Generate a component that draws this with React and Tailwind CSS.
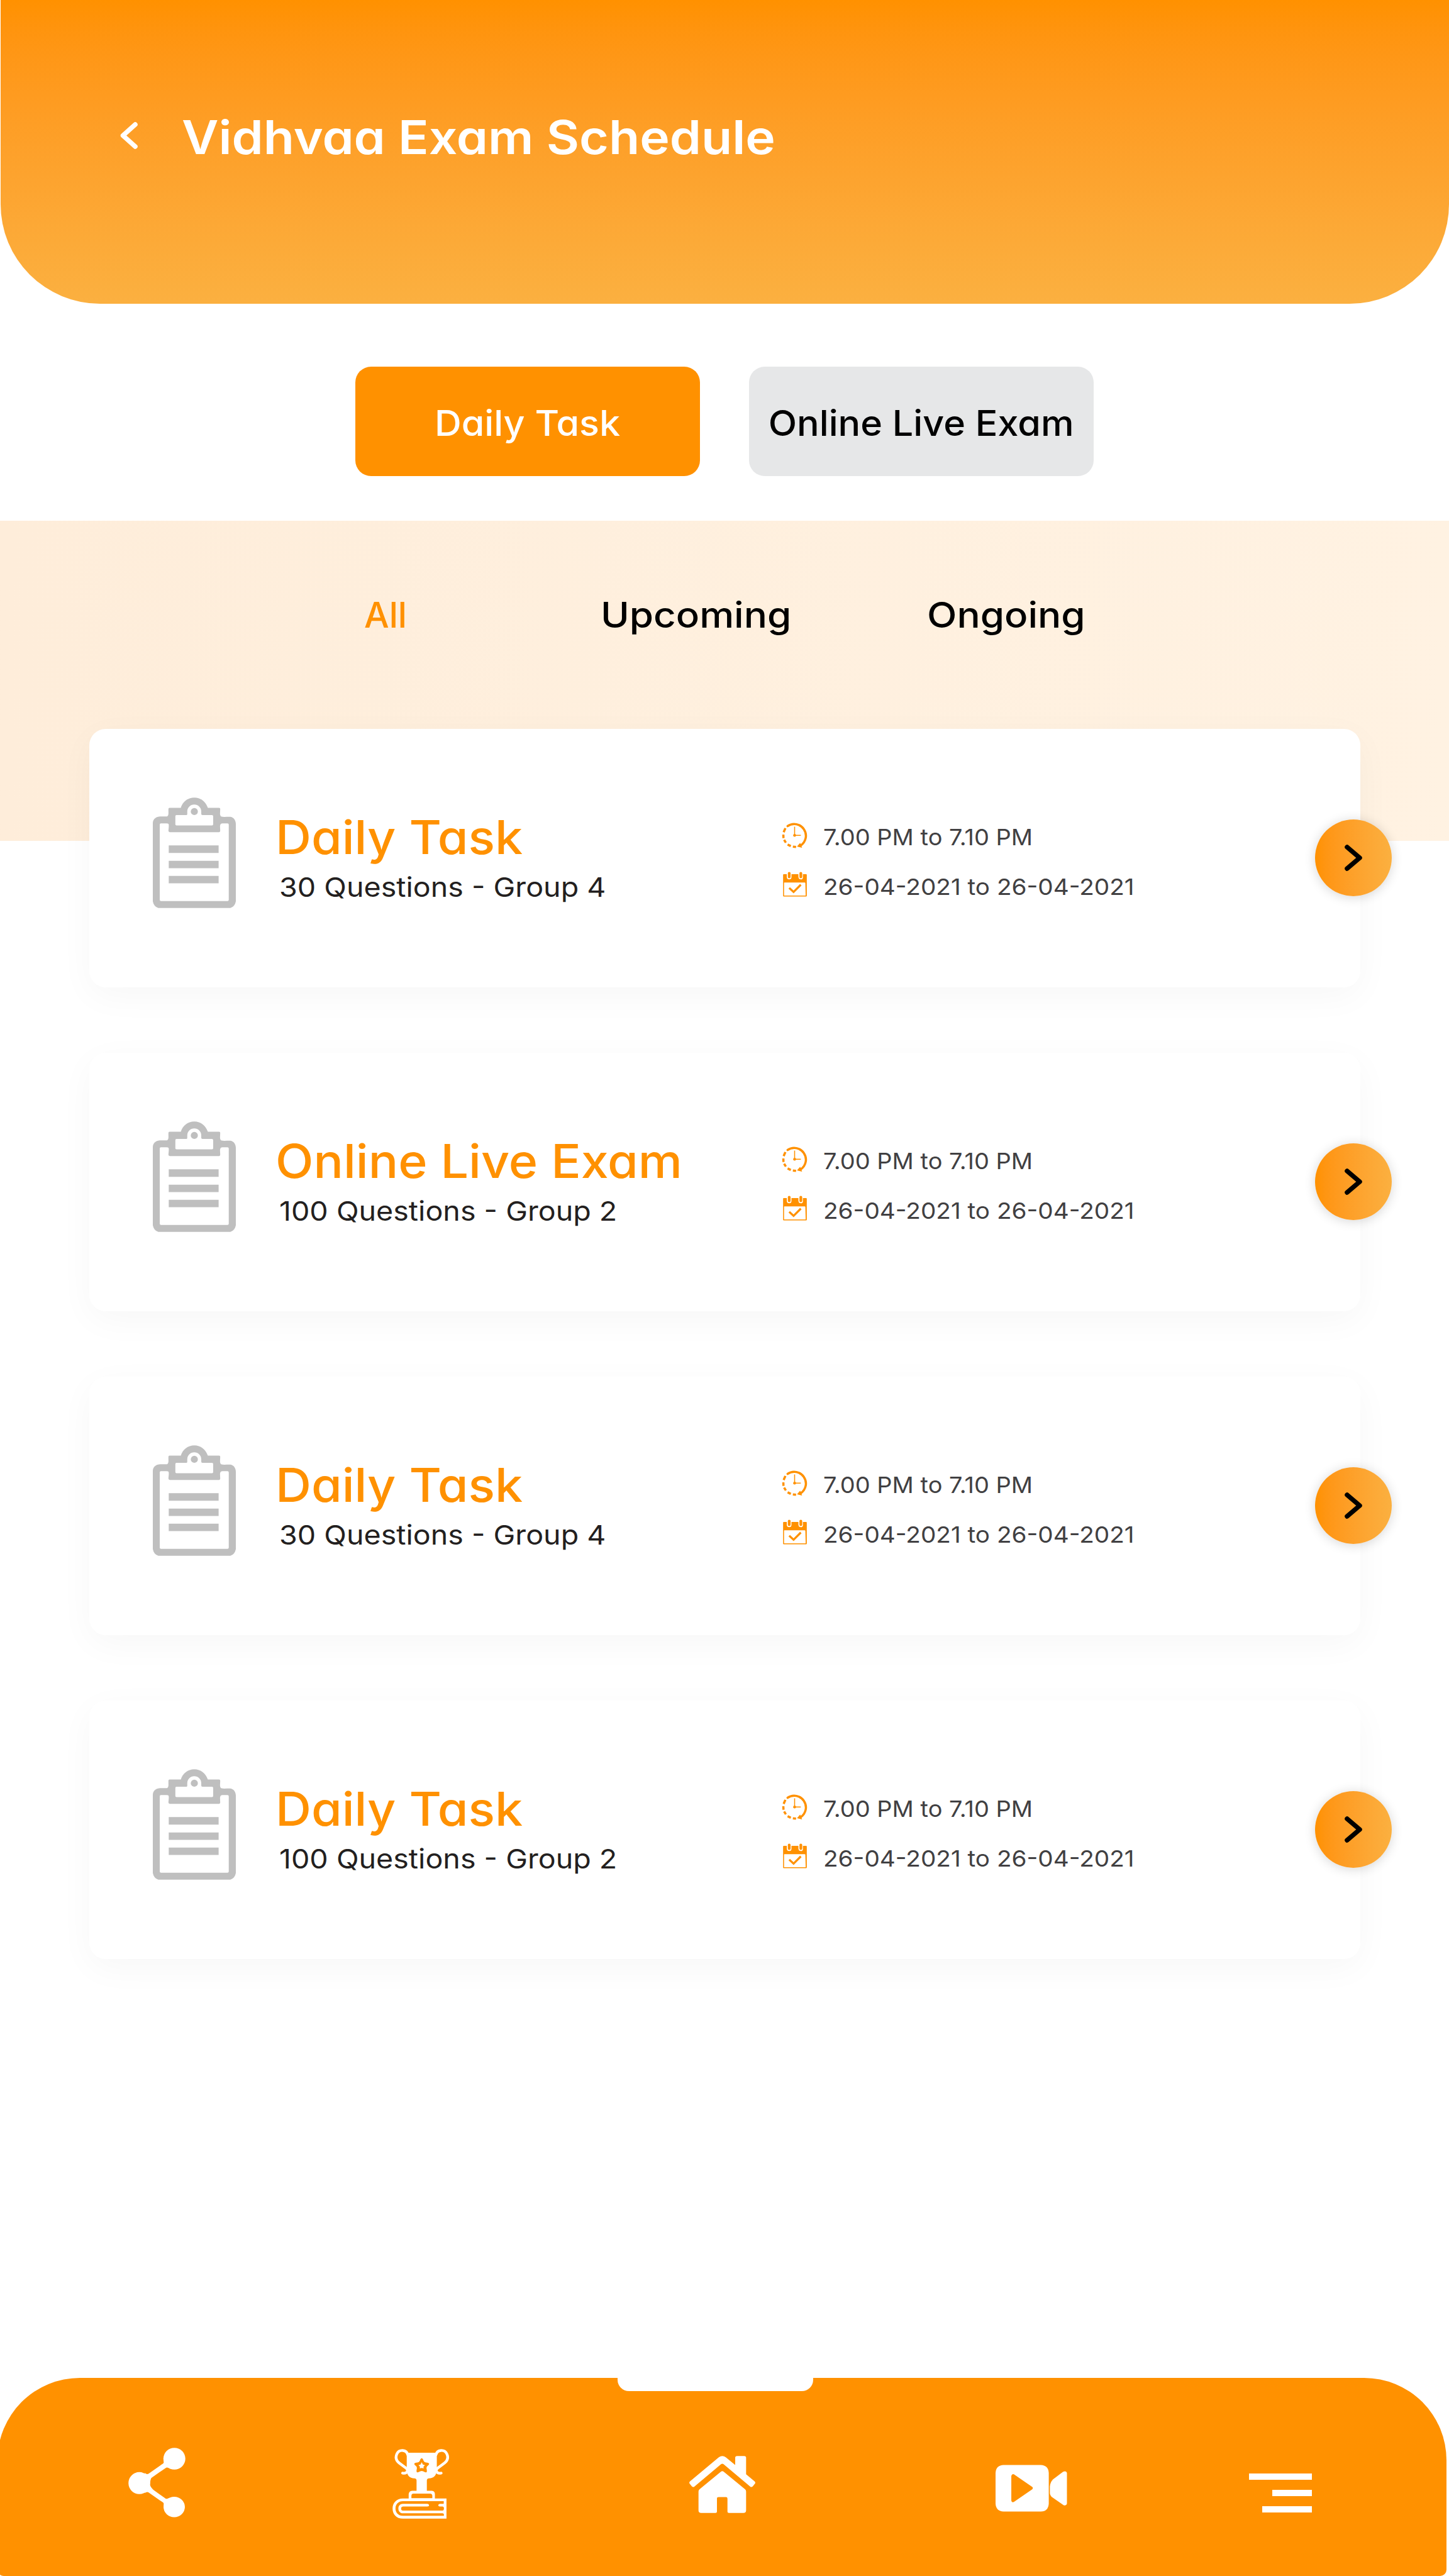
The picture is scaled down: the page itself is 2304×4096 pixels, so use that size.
import React from "react";

const FONT = "font-['Inter','Noto_Sans',sans-serif] [font-feature-settings:'cv11']";

const exams = [
  { title: "Daily Task", meta: "30 Questions - Group 4" },
  { title: "Online Live Exam", meta: "100 Questions - Group 2" },
  { title: "Daily Task", meta: "30 Questions - Group 4" },
  { title: "Daily Task", meta: "100 Questions - Group 2" },
];

function ClipboardIcon() {
  return (
    <svg viewBox="78 93 516 687" className="mt-[109px] ml-[101px] h-[176px] w-[132px] shrink-0 fill-[#bfbfbf]">
      <path
        fillRule="evenodd"
        d="M252 157C264 118 296 93 336 93S406 118 420 157H490Q497 157 497 165C497 185 492 200 502 211C520 216 545 211 560 213C582 217 594 236 594 258V738Q588 770 560 780H112Q84 770 78 738V250C80 226 100 211 124 211H162C180 210 174 185 175 165Q175 157 182 157ZM176 258Q172 253 160 254H128Q121 254 121 262V729Q121 737 129 737H542Q550 737 550 729V262Q550 254 542 254H510C490 256 497 280 497 300Q497 308 490 308H184Q175 308 175 300C176 285 179 268 176 258ZM292 196Q292 202 286 202H225Q218 202 218 209V260Q218 266 225 266H446Q453 266 453 260V209Q453 202 446 202H386Q379 202 379 194V180A43.500 43.500 0 0 0 292 180Z"
      />
      <circle cx="336" cy="180" r="22" />
      <path d="M177 391H487V437H177ZM177 486H487V532H177ZM177 580H487V626H177Z" />
    </svg>
  );
}

function ClockIcon() {
  return (
    <svg viewBox="88 96 164 166" className="-mt-1.5 h-[42px] w-[42px] shrink-0" fill="none" stroke="#ff9100">
      <path d="M124 122A73 73 0 1 1 207 243" strokeWidth="14" strokeLinecap="round" />
      <path d="M110 135L99 160M97 175L98 197M102 208L113 226M124 238L144 248M157 251L177 253" strokeWidth="14" />
      <path d="M183 250L203 227L215 258Z" fill="#ff9100" stroke="none" />
      <path d="M168 126V180H207" strokeWidth="6" />
      <circle cx="168" cy="180" r="9" fill="#ff9100" stroke="none" />
    </svg>
  );
}

function CalendarIcon() {
  return (
    <svg viewBox="93 407 153 156" className="mx-px -mt-1.5 h-[40px] w-[40px] shrink-0">
      <path
        fill="#ff9100"
        fillRule="evenodd"
        d="M100 423H119V440Q120 455 134 455T148 440V423H191V440Q192 455 206 455T219 440V423H239Q243 423 243 427V557Q243 561 239 561H100Q96 561 96 557V427Q96 423 100 423ZM104 474Q102 474 102 478V553Q102 555 104 555H234Q236 555 236 553L234 478Q234 474 230 474Z"
      />
      <path d="M134 417V439M206 417V439" stroke="#ff9100" strokeWidth="17" strokeLinecap="round" />
      <path d="M134 508L161 533L206 488" fill="none" stroke="#ff9100" strokeWidth="13" />
    </svg>
  );
}

function ExamCard({ title, meta }) {
  return (
    <article className="relative flex h-[411px] w-[2021px] items-start rounded-[26px] bg-white shadow-[0_14px_56px_rgba(0,0,0,0.035)]">
      <ClipboardIcon />
      <div className="mt-[135px] ml-[63px] w-[805px] whitespace-nowrap">
        <h2 className="w-max origin-left scale-x-[1.066] text-[74px] leading-none font-medium text-[#ff9100]">{title}</h2>
        <p className="mt-[21px] ml-1.5 w-max origin-left scale-x-[1.084] text-[43px] leading-none text-[#231f20]">{meta}</p>
      </div>
      <div className="mt-[154px] whitespace-nowrap text-[#414042]">
        <div className="flex h-9 items-start">
          <ClockIcon />
          <span className="ml-[24px] origin-left scale-x-[1.055] text-[36px] leading-none">7.00 PM to 7.10 PM</span>
        </div>
        <div className="mt-[43px] flex h-9 items-start">
          <CalendarIcon />
          <span className="ml-[24px] origin-left scale-x-[1.075] text-[36px] leading-none">26-04-2021 to 26-04-2021</span>
        </div>
      </div>
      <button className="absolute top-[144px] -right-[50px] flex h-[122px] w-[122px] items-center justify-center rounded-full bg-linear-to-r from-[#ff9100] to-[#fbb040] shadow-[0_2px_18px_rgba(0,0,0,0.16)]">
        <svg viewBox="0 0 28 42" className="h-[42px] w-[28px]" fill="none" stroke="#000" strokeWidth="7.500" strokeLinecap="round" strokeLinejoin="round">
          <path d="M4 4L24 21L4 38" />
        </svg>
      </button>
    </article>
  );
}

function ShareIcon() {
  return (
    <svg viewBox="798 506 354 432" className="mt-[111px] ml-[208px] h-[111px] w-[91px] shrink-0 fill-white">
      <ellipse cx="1083" cy="574" rx="68" ry="67" />
      <ellipse cx="866" cy="725" rx="67" ry="68" />
      <ellipse cx="1082" cy="873" rx="66" ry="63" />
      <path d="M900 662Q912 674 924 667L1014 603Q1020 598 1016 585L1062 638Q1040 622 1028 632L941 693Q934 702 932 735Q936 753 957 770L1028 820Q1036 826 1055 815L1016 868Q1020 852 1014 846L924 783Q914 776 900 786Z" />
    </svg>
  );
}

function TrophyIcon() {
  return (
    <svg viewBox="24 34 350 434" className="mt-[113px] ml-[329px] h-[111px] w-[90px] shrink-0">
      <g fill="none" stroke="#fff" strokeLinecap="round" strokeLinejoin="round">
        <path d="M118 70C112 38 66 34 51 64C38 92 50 110 66 122L108 153Q118 162 116 172Q110 188 86 184" strokeWidth="17" />
        <path d="M294 70C300 38 346 34 361 64C374 92 362 110 346 122L304 153Q294 162 296 172Q302 188 326 184" strokeWidth="17" />
      </g>
      <path
        fill="#fff"
        d="M112 57H299V165C298 198 280 216 250 217Q237 218 237 230V294H268Q287 296 287 315V342H359V467H88C48 467 24 440 24 405S48 342 88 342H124V315Q126 296 145 294H173V230Q173 218 160 217C130 216 112 198 112 165Z"
      />
      <g fill="#ff9100">
        <path d="M141 340V325Q142 312 154 312H258Q270 313 271 325V340Z" />
        <path d="M342 359V373Q340 376 334 375H318Q308 376 308 384T318 392H334Q342 392 343 400V408Q342 417 334 417H88Q77 416 77 405T88 392H240Q251 391 251 384T240 375H88C70 375 60 388 60 404S70 434 88 434H334Q342 434 343 441V449H88C60 449 42 430 42 404S60 359 88 359Z" />
        <circle cx="281" cy="384" r="9" />
        <path d="M205 92Q211 92 217 108Q221 117 231 118Q250 120 251 126Q252 131 239 142Q234 147 235 155Q240 176 234 179Q229 182 214 173Q205 168 196 173Q181 182 176 179Q170 176 175 155Q176 147 171 142Q158 131 159 126Q160 120 179 118Q189 117 193 108Q199 92 205 92Z" />
      </g>
      <path fill="#fff" d="M205 116L212 131L225 135L216 144L217 155Q205 150 193 155L194 144L185 135L198 131Z" />
    </svg>
  );
}

function HomeIcon() {
  return (
    <svg viewBox="596 617 358 355" preserveAspectRatio="none" className="mt-[124px] ml-[382px] h-[91px] w-[105px] shrink-0 fill-white">
      <path d="M756 626Q775 610 794 626L845 674V628Q845 618 855 618H894Q904 618 904 628V731L950 775Q957 783 951 791L940 806Q933 814 926 807L782 669Q775 662 768 669L624 807Q617 814 610 806L599 791Q593 783 600 775Z" />
      <path d="M768 715Q775 708 782 715L898 824Q904 829 904 838V955Q904 971 889 971H811Q803 971 803 963V882Q803 873 795 873H755Q746 873 746 882V963Q746 971 738 971H661Q646 971 646 955V838Q646 829 652 824Z" />
    </svg>
  );
}

function VideoIcon() {
  return (
    <svg viewBox="34 44 446 291" className="mt-[138px] ml-[382px] h-[75px] w-[114px] shrink-0 fill-white">
      <path
        fillRule="evenodd"
        d="M84 45H315Q362 46 365 94V285Q362 333 315 334H84Q37 332 34 285V94Q37 46 84 45ZM132 112V266Q134 281 148 275L263 195Q270 188 263 182L148 102Q136 98 132 112Z"
      />
      <path d="M454 87Q474 78 478 94V285Q474 300 458 295L382 242Q372 234 372 220V178Q374 152 392 134Z" />
    </svg>
  );
}

function MenuIcon() {
  return (
    <div className="mt-[152px] ml-[289px] flex w-[100px] shrink-0 flex-col items-end gap-4">
      <span className="h-[10px] w-[100px] bg-white" />
      <span className="h-[10px] w-[63px] bg-white" />
      <span className="h-[10px] w-[79px] bg-white" />
    </div>
  );
}

export default function App() {
  return (
    <div className={`flex h-[4096px] w-[2304px] flex-col overflow-hidden bg-white ${FONT}`}>
      <header className="ml-px flex h-[483px] shrink-0 items-start rounded-b-[158px] bg-linear-to-b from-[#ff9100] to-[#fbb040] text-white">
        <svg viewBox="0 0 28 43" className="mt-[194px] ml-[190px] h-[43px] w-[28px]" fill="none" stroke="currentColor" strokeWidth="7.500" strokeLinecap="round" strokeLinejoin="round">
          <path d="M24 4L4.500 21.500L24 39" />
        </svg>
        <h1 className="mt-[181px] ml-[70px] origin-left scale-x-[1.087] text-[74px] leading-none font-semibold whitespace-nowrap">Vidhvaa Exam Schedule</h1>
      </header>

      <div className="flex h-[345px] shrink-0 gap-[78px] pt-[100px] pl-[565px] text-[56px] leading-none font-medium whitespace-nowrap">
        <button className="flex h-[174px] w-[548px] justify-center rounded-[25px] bg-[#ff9100] pt-[62px] text-white">
          <span className="scale-x-[1.058]">Daily Task</span>
        </button>
        <button className="flex h-[174px] w-[548px] justify-center rounded-[25px] bg-[#e6e7e8] pt-[62px] text-black">
          <span className="scale-x-[1.058]">Online Live Exam</span>
        </button>
      </div>

      <nav className="flex h-[509px] shrink-0 items-start bg-linear-to-r from-[#feedda] to-[#fff2e2] pt-[122px] text-[56px] leading-none font-medium whitespace-nowrap text-black">
        <span className="ml-[579px] w-[68px] text-[#ff9100]">All</span>
        <span className="ml-[308px] w-[275px] origin-left scale-x-[1.105]">Upcoming</span>
        <span className="ml-[244px] origin-left scale-x-[1.105]">Ongoing</span>
      </nav>

      <main className="-mt-[178px] ml-[142px] flex flex-1 flex-col gap-[104px]">
        {exams.map((exam, i) => (
          <ExamCard key={i} {...exam} />
        ))}
      </main>

      <footer className="relative -ml-1 flex h-[315px] w-[2304px] shrink-0 items-start rounded-t-[131px] rounded-b-[10px] bg-[#ff9100]">
        <ShareIcon />
        <TrophyIcon />
        <HomeIcon />
        <VideoIcon />
        <MenuIcon />
        <div className="absolute top-[-1px] left-[986px] h-[22px] w-[311px] rounded-b-[18px] bg-white" />
      </footer>
    </div>
  );
}
